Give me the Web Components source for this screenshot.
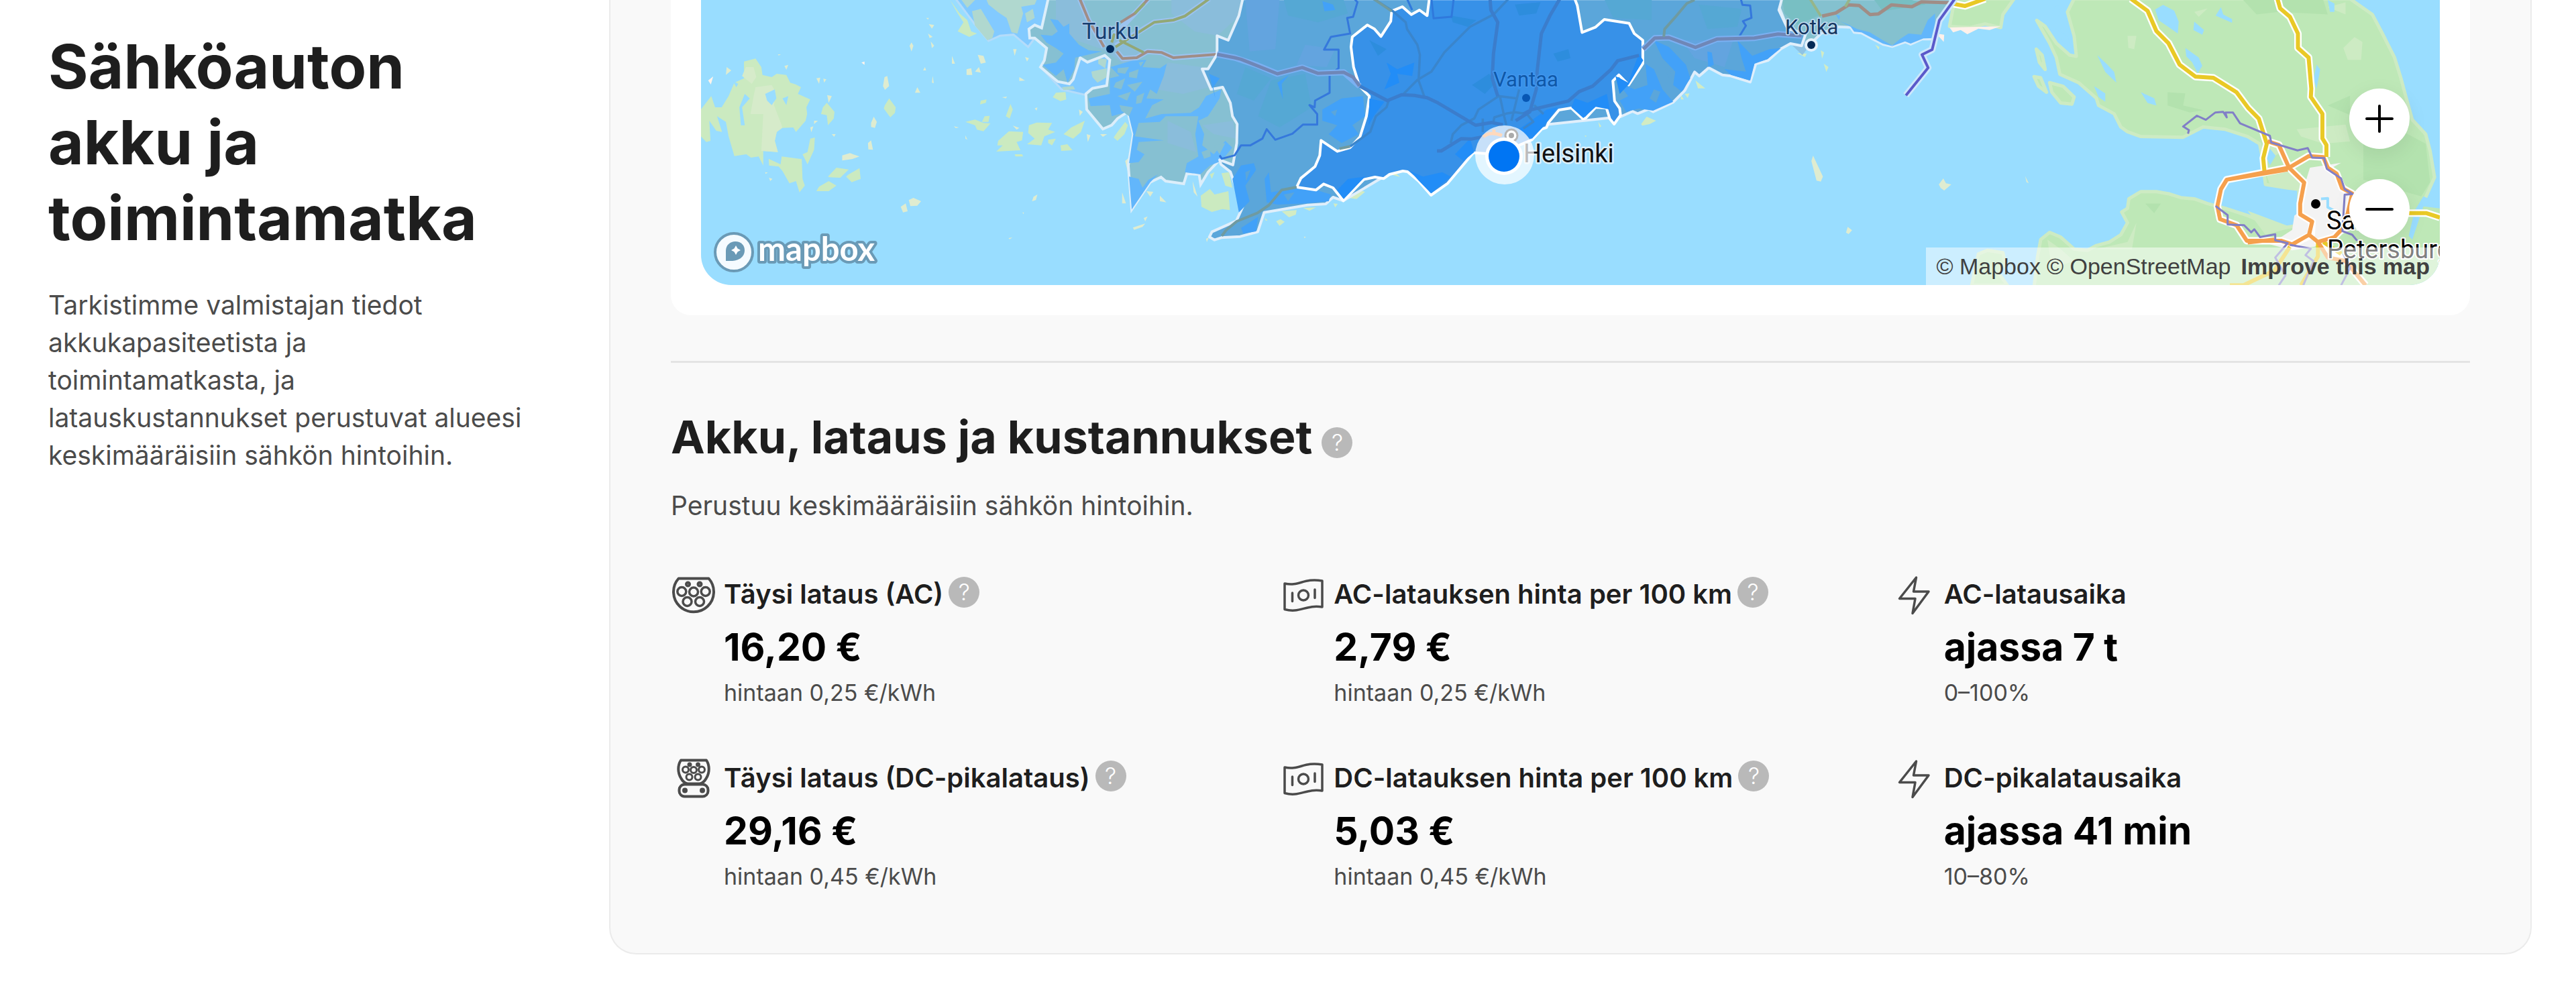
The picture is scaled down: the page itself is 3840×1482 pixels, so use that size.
<!DOCTYPE html>
<html lang="fi">
<head>
<meta charset="utf-8">
<meta name="viewport" content="width=device-width, initial-scale=1">
<title>Sähköauton akku ja toimintamatka</title>
<style>
  body { margin: 0; background: #fff; color: #1e1e1e; font-family: Inter, "Liberation Sans", sans-serif; font-size: 39px; line-height: 56px; }
</style>
</head>
<body>
<info-section>
  <span slot="title">Sähköauton akku ja toimintamatka</span>
  <span slot="intro">Tarkistimme valmistajan tiedot akkukapasiteetista ja toimintamatkasta, ja latauskustannukset perustuvat alueesi keskimääräisiin sähkön hintoihin.</span>
  <range-map></range-map>
  <cost-summary>
    <span slot="title">Akku, lataus ja kustannukset</span>
    <span slot="intro">Perustuu keskimääräisiin sähkön hintoihin.</span>
    <stat-item icon="ac" help label="Täysi lataus (AC)" value="16,20 €">hintaan 0,25 €/kWh</stat-item>
    <stat-item icon="bill" help label="AC-latauksen hinta per 100 km" value="2,79 €">hintaan 0,25 €/kWh</stat-item>
    <stat-item icon="bolt" label="AC-latausaika" value="ajassa 7 t">0–100%</stat-item>
    <stat-item icon="dc" help label="Täysi lataus (DC-pikalataus)" value="29,16 €">hintaan 0,45 €/kWh</stat-item>
    <stat-item icon="bill" help label="DC-latauksen hinta per 100 km" value="5,03 €">hintaan 0,45 €/kWh</stat-item>
    <stat-item icon="bolt" label="DC-pikalatausaika" value="ajassa 41 min">10–80%</stat-item>
  </cost-summary>
</info-section>

<template id="info-section">
  <style>
    :host { display: grid; grid-template-columns: minmax(0, 715px) minmax(0, 1fr); column-gap: 121px; padding: 0 66px 58px 72px; }
    h2 { margin: 43px 0 45px; font-size: 91px; line-height: 113px; font-weight: 700; }
    p { margin: 0; color: #4b4b4b; }
    .panel { box-sizing: border-box; border: 2px solid #ebebeb; border-top: 0; border-radius: 0 0 40px 40px; background: #f9f9f9; padding: 0 90px 90px; }
  </style>
  <header><h2><slot name="title"></slot></h2><p><slot name="intro"></slot></p></header>
  <div class="panel"><slot></slot></div>
</template>

<template id="help-tip">
  <style>
    :host { display: inline-flex; flex: none; }
    button { display: flex; align-items: center; justify-content: center; width: 46px; height: 46px; padding: 0; border: 0; border-radius: 50%; background: #b9b9b9; color: #fff; font: 300 34px/46px Inter, sans-serif; cursor: pointer; }
  </style>
  <button type="button" aria-label="Lisätietoja">?</button>
</template>

<template id="cost-summary">
  <style>
    :host { display: block; margin-top: 68px; border-top: 3px solid #e4e4e4; padding-top: 68px; }
    .head { display: flex; align-items: flex-end; gap: 14px; }
    .head help-tip { margin-bottom: 10px; }
    h3 { margin: 0; font-size: 68px; line-height: 84px; font-weight: 700; }
    p { margin: 33px 0 76px; color: #4b4b4b; }
    .grid { display: grid; grid-template-columns: repeat(3, minmax(0, 1fr)); gap: 75px 46px; }
  </style>
  <div class="head"><h3><slot name="title"></slot></h3><help-tip></help-tip></div>
  <p><slot name="intro"></slot></p>
  <div class="grid"><slot></slot></div>
</template>

<template id="stat-item">
  <style>
    :host { display: grid; grid-template-columns: 68px minmax(0, 1fr); column-gap: 11px; }
    svg { display: block; width: 68px; height: 56px; overflow: visible; fill: none; stroke: #4b4b4b; stroke-width: 4; stroke-linecap: round; stroke-linejoin: round; }
    .label { display: flex; align-items: flex-start; gap: 8px; }
    .label help-tip { margin-top: 2px; }
    h4 { margin: 0; font-size: 40px; line-height: 56px; font-weight: 600; }
    .value { margin: 16px 0 9px; font-size: 57px; line-height: 70px; font-weight: 700; color: #000; }
    .hint { font-size: 34px; line-height: 48px; color: #4b4b4b; }
  </style>
  <svg viewBox="0 0 68 56" aria-hidden="true"></svg>
  <div><div class="label"><h4></h4></div><div class="value"></div><div class="hint"><slot></slot></div></div>
</template>

<template id="range-map">
  <style>
    :host { display: block; background: #fff; padding: 0 45px 45px; border-radius: 0 0 30px 30px; }
    .map { position: relative; height: 425px; border-radius: 0 0 45px 45px; overflow: hidden; background: #99ddff; }
    svg.canvas { display: block; width: 100%; height: 100%; }
    svg.canvas path, svg.canvas polygon { vector-effect: non-scaling-stroke; }
    .zoom { position: absolute; right: 45px; bottom: 68px; display: flex; flex-direction: column; gap: 45px; }
    .zoom button { width: 90px; height: 90px; padding: 0; border: 0; border-radius: 50%; background: #fff; box-shadow: 0 8px 30px rgba(0,0,0,.08); display: grid; place-items: center; }
    .zoom svg { width: 42px; height: 42px; stroke: #000; stroke-width: 4; stroke-linecap: round; }
    .credit { position: absolute; right: 0; bottom: 0; display: flex; gap: 9px; padding: 0 15px; background: rgba(255,255,255,.5); font: 34px/56px "Liberation Sans", Arial, sans-serif; color: #404040; }
    .credit a { color: #404040; text-decoration: none; white-space: nowrap; }
    .credit a:last-child { font-weight: 700; margin-left: 6px; }
    .city { font-family: Roboto, sans-serif; paint-order: stroke; stroke-linejoin: round; }
    .brand { font: 700 49px Lato, sans-serif; fill: #fff; stroke: #6a9ab6; stroke-width: 8; paint-order: stroke; stroke-linejoin: round; }
  </style>
  <div class="map">
    <svg class="canvas" viewBox="1045 0 2592 425" preserveAspectRatio="xMidYMid slice" role="img" aria-label="Toimintamatka kartalla">
      <!-- Western archipelago and the Turku coast -->
      <g transform="translate(1000) scale(.574 .33333)">
        <g fill="#cbeac0">
          <path d="M190 275 220 262 235 300 238 335 262 345 275 330 300 335 310 370 325 378 338 390 330 420 362 445 352 480 354 510 350 540 325 590 318 570 290 572 275 590 270 630 278 680 240 675 240 740 228 700 208 705 196 690 165 698 150 610 143 545 120 520 133 590 118 585 100 540 103 630 92 635 78 610V490L105 430 115 480 132 480 150 430 165 370 190 350Z"/>
          <path d="M254 710 285 735 288 700 340 712 342 800 348 830 334 860 325 810 308 820 290 765 280 745 255 740ZM362 620 374 615 372 670 355 735 342 690 355 680ZM395 480 405 460 425 500 423 530 408 560 405 515 390 510ZM408 790 430 750 462 758 440 795 412 793ZM462 780 490 752 493 800 470 815 455 790ZM385 835 410 810 430 830 410 855 378 855ZM185 380 175 420 162 410 165 370Z"/>
          <path d="M556 470 567 440 584 480 582 505 570 525 553 485ZM850 630 878 587 915 590 912 628 898 635 908 672 845 678 862 650 848 650ZM930 560 950 548 990 550 980 580 998 590 970 610 962 650 925 645 945 620 928 595ZM1020 600 1040 570 1075 540 1065 590 1045 620 1020 600ZM765 545 790 535 812 550 830 552 812 587 795 580 790 560ZM805 450 820 445 818 460 803 467ZM815 520 828 518 825 545 808 545ZM882 465 888 490 880 530 870 520ZM1012 650 1030 645 1043 672 1014 675ZM980 625 1000 620 990 650 980 640ZM893 690 912 690 915 700 895 700ZM1000 415 1025 412 1027 445 1012 452 992 435ZM1160 590 1180 545 1187 560 1178 600 1160 630 1150 615ZM1376 875 1400 845 1412 870 1448 855 1452 940 1432 935 1405 948 1378 925ZM1430 775 1450 770 1458 840 1440 830ZM1400 780 1412 770 1405 800ZM725 0 750 60 770 90 780 140 795 150 775 165 745 140 760 100 745 60Z"/>
        </g>
        <path fill="#d6ebca" d="M220 390 262 380 272 410 268 470 290 570 275 590 270 630 278 680 235 675 240 510 207 510 215 430ZM195 300 185 340 210 375 222 345 215 300Z"/>
        <path fill="#99ddff" d="M192 420 205 440 185 480 192 560 182 560 178 480ZM245 420 270 400 274 440 262 470 250 450ZM300 470 290 440 305 430ZM160 360 175 375 170 390Z"/>
        <path fill="#dfecd0" d="M378 350 388 347 385 375ZM396 352 404 355 398 370ZM406 425 418 430 410 460ZM555 345 562 340 567 385 556 402 551 385ZM625 190 630 205 625 230 620 205ZM675 185 684 205 678 215ZM670 108 684 112 678 128ZM663 80 670 80 668 88ZM668 150 680 165 672 170ZM730 250 738 285 730 285ZM768 310 780 305 783 335 768 335ZM790 320 800 300 805 325ZM797 245 812 250 818 280 805 285ZM889 220 898 220 893 250ZM920 255 930 260 925 275ZM905 345 920 360 905 362ZM634 415 640 390 648 415ZM680 340 683 372 678 370ZM660 300 663 315 655 315ZM520 550 527 522 535 545 530 572 520 568ZM512 640 520 628 525 670 513 668ZM445 695 465 685 490 700 470 712 445 718ZM597 925 610 910 615 945 603 950ZM618 895 630 885 650 900 640 920 622 922ZM942 880 952 870 948 895 938 900ZM1200 1018 1232 1000 1225 1015 1203 1028ZM1228 975 1238 968 1232 990ZM1235 855 1253 858 1245 880ZM1270 875 1287 905 1270 900ZM1172 860 1182 910 1172 910ZM1180 720 1190 705 1187 770ZM888 562 905 572 898 580ZM735 565 748 570 740 573ZM765 605 770 625 765 620ZM1115 600 1133 600 1122 612ZM1080 600 1090 605 1083 635ZM1060 490 1070 500 1062 518ZM860 435 873 432 870 440ZM945 485 952 480 950 495ZM145 300 157 315 143 335ZM295 295 305 290 300 312ZM278 243 286 243 280 248ZM255 795 264 800 258 810ZM245 770 252 772 246 778ZM418 600 428 600 424 612ZM372 540 382 540 372 555ZM362 570 370 565 365 592ZM877 1065 887 1062 880 1070ZM913 950 917 950 916 958ZM1355 810 1368 880 1358 860ZM1390 1068 1397 1062 1392 1083Z"/>
        <path fill="#fff4ec" d="M97 360 110 342 104 378ZM495 280 503 275 503 290Z"/>
        <!-- NW districts -->
        <path fill="#82caff" stroke="#b4dcfa" stroke-width="3" d="M740-5 790 110 825 183 855 160 890 155 928 210 945 170 930 130 945 112 963 125 980-5Z"/>
        <path fill="#b0d8cf" d="M782 50 805 40 840 140 835 170 822 180 790 115ZM820 0H950L945 20 910 30 915 60 900 150 885 145 872 80 850 55 825 20ZM755 0 790 0 770 35ZM920 60 940 40 945 80 925 100Z"/>
        <path fill="#82caff" stroke="#b4dcfa" stroke-width="3" d="M960 300 1015 400 1078 425 1140 383V240H1055Z"/>
        <path fill="#b0d8cf" d="M1110 260 1132 265 1128 305 1110 285ZM1092 320 1132 305 1132 345 1108 370 1095 345ZM1015 390 1045 385 1050 400 1020 403Z"/>
        <!-- Turku district -->
        <path fill="#86c0d2" stroke="#dceefa" stroke-width="4" d="M980-5 963 125 945 112 930 130 932 170 945 170 976 215 970 270 960 300 1005 365 1035 375 1045 355 1063 258 1082 278 1127 248 1140 268 1132 383 1095 395 1078 420 1080 490 1122 577 1145 560 1160 530 1187 500 1201 600 1188 740 1197 937 1245 815 1273 792 1285 810 1332 822 1340 777 1372 780 1376 825 1395 770 1425 715 1460 738 1500 500V-5Z"/>
        <path fill="#8abddb" d="M1000 0 1060 0 1100 130 1170 180 1240 230 1180 290 1120 220 1000 150ZM1300 0 1480 0 1470 80 1420 160 1360 140 1300 60ZM1290 280 1380 300 1400 390 1330 420 1260 400ZM1290 540 1350 590 1365 680 1290 640ZM1380 560 1460 540 1468 620 1410 600Z"/>
        <path fill="#62b6fb" d="M985 85 1005 90 1020 120 1035 105 1035 150 1060 200 1085 225 1120 230 1050 258 1048 310 1030 370 1020 310 1000 340 965 290 1000 280 1020 240 1000 215 975 190 960 155 990 160 1005 140ZM1142 300 1200 270 1235 268 1225 300 1270 305 1288 285 1280 340 1262 420 1245 400 1235 440 1280 445 1250 470 1232 530 1275 510 1350 505 1372 480 1390 430 1430 400 1425 440 1395 520 1370 540 1385 600 1380 650 1410 690 1440 630 1458 660 1430 720 1400 740 1375 780 1335 770 1340 730 1370 700 1362 600 1370 520 1285 520 1270 545 1215 550 1205 610 1280 628 1215 635 1210 670 1230 690 1215 725 1190 730 1201 600 1187 500 1145 520 1140 470 1090 475 1085 440 1140 420 1140 350 1165 340ZM1190 790 1215 800 1225 840 1240 805 1265 780 1245 815 1197 937Z"/>
        <path fill="#86c0d2" d="M1160 305 1190 300 1180 330 1160 325ZM1190 325 1215 310 1210 350 1190 345ZM1155 370 1180 350 1170 400 1150 390ZM1185 380 1225 365 1205 410ZM1210 430 1230 415 1222 460 1208 465ZM1160 430 1195 410 1185 450ZM1165 470 1200 480 1190 520 1170 495ZM1378 680 1400 665 1402 700 1385 710ZM1410 650 1440 640 1425 690ZM1215 280 1228 275 1220 298Z"/>
        <g fill="none" stroke="#9cc3ef" stroke-width="8" stroke-linejoin="round"><path d="M1062-5 1085 90 1125 210M1150 160 1205 60 1240-5M1155 205 1255 100 1305 90 1335 72 1398-5M1158 230 1173 262 1210 258 1238 230 1275 235 1305 258 1418 243"/></g>
        <g fill="none" stroke-width="4" stroke-linejoin="round"><path stroke="#a08d86" d="M1062-5 1085 90 1125 210M1168 100 1205 60 1240-5M1158 230 1173 262 1210 258 1238 230 1275 235 1305 258 1418 243"/><path stroke="#92a875" d="M1145 190 1152 150M1205 60 1230 15M1155 210 1255 100 1305 90 1335 72 1398-5M1165 180 1228 235"/></g>
      </g>
      <!-- Southern coast -->
      <g transform="translate(1850) scale(.6378 .33333)" stroke-linejoin="round">
        <path fill="#d3ecc3" d="M250 885 275 850 290 858 270 890ZM95 945 130 940 128 960 112 972ZM145 930 175 928 160 943ZM82 990 92 980 102 992 90 1010ZM55 975 62 985 58 988ZM216 910 226 912 220 928ZM350 780 362 775 372 792ZM935 555 948 522 970 540 955 555 938 562ZM1062 360 1085 395 1068 395ZM1037 420 1048 418 1044 438ZM1028 425 1035 445 1028 445ZM835 545 842 565 838 570ZM803 605 808 608 805 613ZM733 505 738 520 732 528ZM1355 225 1363 235 1358 262ZM1362 285 1373 300 1368 322ZM1300 238 1322 240 1318 255ZM1482 200 1492 210 1490 222Z"/>
        <path fill="#dfecd0" d="M1337 696 1360 790 1355 812 1345 808 1333 720ZM1418 1015 1428 1030 1420 1047 1414 1040ZM147 1058 152 1060 148 1065Z"/>
        <path fill="#84c1cf" stroke="#d8ecfb" stroke-width="4" d="M1250-5 1278 130 1310 205 1330 200 1355 150 1395 120 1425 122 1433 145 1450 148 1500 198 1522 208 1553 187 1565 198 1591 175 1614 175 1630 91 1661-5Z"/>
        <path fill="#78bfc3" d="M1265 0 1330 0 1350 70 1300 110 1270 60ZM1480 0H1568L1600 20 1500 50Z"/>
        <path fill="#62b6fb" d="M1400 95 1420 110 1440 130 1470 145 1500 180 1522 203 1540 175 1560 150 1590 155 1605 90 1622 60 1622 170 1595 172 1565 195 1552 185 1522 206 1500 195 1450 145 1433 142 1425 120ZM1390 65 1400 70 1398 90Z"/>
        <path fill="#8fc3e4" d="M1284 195 1325 180 1330 200 1312 247Z"/>
        <path fill="#5ba6da" stroke="#e1effb" stroke-width="4" d="M4-5-5 70-30 180-56 160-56 243-77 308-91 308-70 400-43 390-25 460-20 520-9 555-10 640-19 738-50 715-47 735-25 768 4 925-11 988-68 1037-74 1060-62 1073-46 1063-2 1058 39 1037 54 950 155 917 198 912 215 882 239 898 500 600 887 522 915 498 927 508 953 488 963 500 1010 457 1037 405 1060 322 1071 340 1093 303 1125 335 1145 340 1190 367 1203 286 1232 270 1262 218 1284 195 1310 205 1320 150 1278 130 1257 45 1264-5Z"/>
        <path fill="#55a8d4" d="M100 0 240 0 250 60 180 100 110 70ZM70 360 150 330 165 480 90 570 40 520ZM850 0 960 0 960 90 870 80ZM1070 20 1170 40 1160 120 1090 130ZM10 300 70 350 30 450-10 420Z"/>
        <path fill="#63a4df" d="M10 0 90 0 80 220 20 230ZM150 200 220 220 200 300 130 290ZM1030 180 1150 180 1130 300 1060 260Z"/>
        <path fill="#42a1f8" d="M190 5 215 20 220 45 195 50ZM190 490 235 440 285 430 290 520 260 560 275 600 235 640 205 600 225 560 190 540ZM0 740 30 730 35 760 10 830 20 900-5 950-20 800ZM55 800 65 770 70 860 100 850 130 835 175 850 210 870 205 900 150 910 85 915 60 905ZM-60 440-75 330-50 350-65 390ZM85 370 112 335 95 375 98 445ZM945 285 965 310 985 400 1010 455 963 495 930 485 900 500 885 450 905 430 880 370 920 400 950 380ZM965 180 1000 210 1040 290 1050 350 1030 410 1010 380 1015 320 985 260ZM1160 180 1195 250 1235 220 1262 215 1230 265 1200 285 1190 360 1145 335 1130 310 1180 320 1170 260ZM1090 230 1100 235 1105 290 1092 300ZM0 1020 40 970 35 1035 5 1045Z"/>
        <path fill="#5ba6da" d="M10 770 22 760 12 810ZM210 500 225 490 220 520ZM965 400 980 410 970 460 955 440ZM990 300 1005 320 1000 350ZM100 870 125 860 110 900Z"/>
        <g fill="none" stroke="#3578dc" stroke-width="3"><path d="M-50 695-45 710-15 695 0 650 22 650 50 620 60 578 80 625 120 598 145 557 178 557V510L160 470 172 480 173 450 207 415V335L228 305V222H194L210 165 255 150 248 80 262 75 272 10 265-5M1168-5 1172 22 1190 25 1193 80 1173 95 1180 115 1163 168"/></g>
        <path fill="#3791e8" stroke="#fff" stroke-width="4" d="M440-5 435 70 417 45 398 65 377 30 352 50 350 95 327 163 312 130 295 112 260 165 257 210 263 300 277 385 300 430 293 520 278 612 255 660 225 677 187 628 184 695 173 745 140 797 130 837 175 850 193 823 215 840 239 898 287 803 313 792 333 799 347 780 378 765 389 768 415 810 444 873 483 820 543 683 600 690 680 625 703 577 714 570 718 550 743 492 772 483 799 532 806 528 829 480 854 483 862 532 872 555 887 515 885 485 873 452 869 362 883 335 906 380 939 285 939 180 919 150 907 104 849 87 828 122 797 145 786 25 780-5Z"/>
        <path fill="#2d8ddd" d="M490 70 550 90 530 120 495 100ZM540 380 580 330 595 370 570 420ZM730 240 765 220 770 260 740 275ZM640 20 700 10 690 60 650 70ZM300 180 340 220 320 250Z"/>
        <path fill="#228df7" d="M340 280 365 310 405 280 400 340 365 330 370 370 335 400 350 330ZM300 440 335 455 310 520 298 560ZM225 850 250 800 290 790 240 890ZM395 765 425 790 470 770 490 790 444 865 415 808ZM500 690 535 620 545 680 520 720ZM780 440 810 460 855 420 862 490 829 478 800 528 772 480ZM875 340 905 370 930 240 940 270 906 378 885 420ZM640 590 715 490 740 480 705 570 680 620Z"/>
        <g fill="none" stroke="#3a85cc" stroke-width="3.5"><path d="M310-5 355 50 385 100 388 130 412 200 418 245 415 360 428 430M625-5 590 65 535 120 475 235 445 320 412 358 380 420M345 450 340 480 315 520 302 590 255 655M490 640 495 600 515 560 545 530 555 490 602 430 645 440M605 430 615 520 620 560M590 545 592 525 620 508 640 502 668 510 683 545 660 575M565 530V590M632 540 650 400M685 470 707 510"/></g>
        <g fill="none" stroke="#3b7dcc" stroke-width="5"><path d="M277 385 342 450 375 424 405 427 435 437 460 460 548 560 585 548 612 558M745-5 722 70 702 150 692 320 690 400 675 500 642 540M582-5 584 45 600 100 590 240 587 350 600 430M458 675H468L515 620 538 622 570 610M660 510 680 490 765 452 790 410 822 385 865 310 880 272 930 248"/></g>
        <path fill="none" stroke="#2f79dc" stroke-width="3" d="M445-5 450 82 492 75 497-5M388-5 400 45"/>
        <path fill="none" stroke="#7bb0f2" stroke-width="9" d="M-56 243-15 258 35 290 85 330 143 302 180 328 240 323 277 385M940 220 967 170 1000 168 1062 212 1112 175 1200 170 1255 152 1310 160"/>
        <path fill="none" stroke="#6f87b7" stroke-width="5" d="M-56 243-15 258 0 265 85 330 143 302 180 328 240 323 262 345 277 385M940 220 967 170 1000 168 1062 212 1112 175 1200 170 1255 152 1310 160"/>
        <path fill="none" stroke="#6f9aa0" stroke-width="4" d="M130 837 95 850 65 918 38 953-10 990-35 1030-45 1055M230 665 255 655M1060 0 1042 15 1018 70 990 130 988 165M310-5 352 50"/>
        <path fill="none" stroke="#a08d86" stroke-width="5" d="M1358 72 1390 58 1420 22 1445 25 1470 65 1490 62 1520 22 1568 30 1590 8 1655 12"/>
        <path fill="none" stroke="#96b58a" stroke-width="4" d="M1330-5 1355 72M1423-5 1412 30"/>
      </g>
      <!-- Karelian Isthmus and the Gulf -->
      <g transform="translate(2800) scale(.6633 .35714)" stroke-linejoin="round">
        <g fill="#bee8b7" stroke="#cdebc3" stroke-width="5">
          <path d="M172-5H305L280 60 275 115 240 100 205 115 160 110Z"/>
          <path d="M440-5 425 50 440 150 445 235 430 230 400 180 375 110 356 85 385 180 400 240 408 310 450 345 490 410 495 440 530 475 545 530 560 550 590 570 685 573 730 530 780 540 830 570 857 600 862 650 870 770 920 785 945 790V940L900 955 830 900 780 870 740 850 710 830 680 825 655 810 625 800 590 800 563 830 560 870 547 885 560 930 545 980 520 1010 490 1025 470 1045 440 1040 410 990 385 970 365 1000 358 1070 350 1200H1270V865L1225 845 1250 740 1240 630 1230 560 1200 500 1185 400 1175 330 1160 240 1130 130 1110 60 1060-5Z"/>
          <path d="M385 345 415 360 440 405 435 435 410 430 390 385ZM350 320 365 325 378 385 360 360ZM355 205 368 230 375 290 362 260ZM225 1060 245 1045 280 1055 285 1100 270 1140 290 1191H210Z"/>
        </g>
        <path fill="#fff1ea" d="M160 115 275 110 250 125 225 120 200 143 185 125 168 135ZM130 140 148 145 147 175Z"/>
        <path fill="#dfecd0" d="M136 770 146 745 152 765 164 770 148 795 140 785ZM330 735 338 765 333 760Z"/>
        <path fill="#b3e2ae" d="M820 0 1000 0 1010 60 900 50 850 60ZM650 385 690 390 685 440 730 460 700 470 650 440ZM1090 560 1180 550 1230 600 1240 760 1220 820 1090 750ZM600 850 635 850 620 890ZM1010 440 1060 400 1060 480Z"/>
        <path fill="#cdebc3" d="M1045 200 1070 155 1088 175 1085 250 1055 250ZM560 150 580 150 575 205 562 200ZM710 50 740 35 720 70ZM940 540 1050 520 1060 590 1000 600 950 570ZM860 620 890 610 900 640 870 680ZM870 720 950 720 950 790 880 770ZM830 880 930 950 870 980ZM380 1000 410 1040 440 1090 390 1120ZM490 1040 560 1010 580 930 570 1040ZM1010 30 1050 10 1050 60Z"/>
        <path fill="#99ddff" d="M622 40 640 20 665 45 675 90 673 140 650 110 630 85ZM758 65 770 30 775 60 795 80 795 95ZM710 90 732 125 728 145 708 125ZM690 200 720 240 728 275 718 305 705 260 692 235ZM590 385 620 410 625 440 605 430ZM492 230 515 270 530 300 535 345 510 300ZM485 360 510 390 510 425 495 405ZM398 120 425 150 435 200 415 175ZM985 270 993 290 985 370 978 330ZM880 620 893 650 880 690 873 660ZM1010 0 1025 15 1025 50 1015 50ZM395 30 405 20 410 60 400 70ZM1225 820 1262 850V870L1225 862 1200 1000 1192 985 1205 880Z"/>
        <path fill="#f3f3f3" d="M970 700 1040 680 1010 710 1040 750 1065 810 1060 960 1020 1000 980 1030 930 1045 880 1020 930 960 935 900 950 880 945 790 960 760Z"/>
        <path fill="none" stroke="#99ddff" stroke-width="4" d="M995 830 1010 828V865L1025 880"/>
        <g fill="none" stroke="#fff" stroke-width="11"><path d="M568-5 605 45 625 130 652 180 677 270 713 320 753 325 805 385 832 452 855 495 873 600 865 660 868 720M897-5 903 35 925 70 943 140V200L967 240 973 370 972 405 998 475V578L1007 605V655M166 15 195 25 240-5M875 590 900 605 923 700 957 762 948 850V895L975 925 973 980 930 1020 905 1005H828L805 940 768 915 762 860 770 790 783 750 923 700 967 652 1000 656 1010 700 1030 725 1042 785 1065 808 1055 890 1040 960 1025 990 988 1010 1050 1090 1095 1191M1190 890H1232L1262 908"/></g>
        <g fill="none" stroke="#e9c926" stroke-width="6"><path d="M568-5 605 45 625 130 652 180 677 270 713 320 753 325 805 385 832 452 855 495 873 600 865 660 868 720M897-5 903 35 925 70 943 140V200L967 240 973 370 972 405 998 475V578L1007 605V655M166 15 195 25 240-5M1190 890H1232L1262 908M988 1010V1070L950 1191M925 1030 890 1130 820 1191 790 1191M1000 1010 1040 1060"/></g>
        <g fill="none" stroke="#f5a04d" stroke-width="6"><path d="M875 590 900 605 923 700 957 762 948 850V895L975 925 968 980 930 1020 905 1005H828L805 940 768 915 762 860 770 790 783 750 923 700 967 652 1000 656 1010 700 1030 725 1042 785 1065 808 1055 890 1040 960 1025 990 988 1010 1010 1075 1050 1090 1095 1191M790 748 920 708M830 1012 890 1000M968 980 988 1010"/></g>
        <g fill="none" stroke="#817fc7" stroke-width="3"><path d="M696 558 698 543 685 528 716 483 736 500 757 470 775 467 783 490 780 470H797L813 515 880 567 883 595 942 628 965 618 975 658 1002 660 1008 705 1040 745 1048 790 1066 810 1048 813 1043 965 1065 980 1076 1005M758 860 785 898V937L822 940 838 970 845 957 858 990 892 978V1003L920 1015 892 1075 915 1150 900 1191M925 1022 972 1038 960 1065 978 1090 955 1191M1045 1060 1060 1120 1040 1191"/></g>
        <path fill="none" stroke="#cce7fc" stroke-width="10" d="M172-5 137 85 121 207 98 228 112 283 62 398"/>
        <path fill="none" stroke="#5b59ca" stroke-width="4" d="M172-5 137 85 121 207 98 228 112 283 62 398"/>
      </g>
      <circle cx="1655" cy="73" r="6" fill="#002b5c"/><circle cx="2275" cy="146" r="6" fill="#0757b4"/><circle cx="2700" cy="67" r="10" fill="#e5f2fc"/><circle cx="2700" cy="67" r="6" fill="#042a56"/><circle cx="3452" cy="304" r="7"/>
      <g class="city">
        <text x="1613" y="58" font-size="34" fill="#173f70" stroke="#a9c9ea" stroke-width="3">Turku</text>
        <text x="2226" y="129" font-size="31" fill="#0f58a8" stroke="#4297ef" stroke-width="3">Vantaa</text>
        <text x="2661" y="51" font-size="31" fill="#14365f" stroke="#c4def3" stroke-width="3">Kotka</text>
        <text x="2271" y="242" font-size="38" fill="#111" stroke="#d9effc" stroke-width="5">Helsinki</text>
        <text x="3468" y="342" font-size="38" stroke="#fff" stroke-width="4">Saint</text>
        <text x="3469" y="385" font-size="38" stroke="#fff" stroke-width="4">Petersburg</text>
      </g>
      <circle cx="2243" cy="231" r="44" fill="#fff" fill-opacity=".72"/>
      <path d="M2211 204q10-9 28-2M2227 193v8" fill="none" stroke="#ffd9bd" stroke-width="5"/>
      <circle cx="2253" cy="202" r="9" fill="#fff" stroke="#b5b5b5" stroke-width="3"/><circle cx="2253" cy="202" r="4" fill="#aaa"/>
      <circle cx="2242" cy="233" r="28" fill="#fff"/><circle cx="2242" cy="233" r="23" fill="#0075f3"/>
      <circle cx="1094" cy="376" r="28" fill="#f5fbff" stroke="#6a9ab6" stroke-width="4"/>
      <path fill="#6a9ab6" d="M1082 389V374C1082 365 1089 360 1096 360C1105 360 1110 366 1110 373C1110 384 1100 389 1090 389Z"/>
      <path fill="#fff" d="M1097 366 1099.500 370.500 1104 373 1099.500 375.500 1097 380 1094.500 375.500 1090 373 1094.500 370.500Z"/>
      <text class="brand" x="1130" y="389">mapbox</text>
    </svg>
    <div class="zoom">
      <button type="button" aria-label="Lähennä"><svg viewBox="0 0 42 42" aria-hidden="true"><path d="M2 21H40M21 2V40"/></svg></button>
      <button type="button" aria-label="Loitonna"><svg viewBox="0 0 42 42" aria-hidden="true"><path d="M2 21H40"/></svg></button>
    </div>
    <div class="credit"><a href="#mapbox">© Mapbox</a><a href="#osm">© OpenStreetMap</a><a href="#improve">Improve this map</a></div>
  </div>
</template>

<script>
  const icons = {
    ac: '<g stroke-width="4"><path d="M11.500 4.500H56.500A30 30 0 1 1 11.500 4.500Z"/></g><g stroke-width="3.500"><circle cx="16.300" cy="24" r="6.500"/><circle cx="34" cy="24.500" r="6.500"/><circle cx="51.700" cy="24" r="6.500"/><circle cx="24.500" cy="39" r="6.500"/><circle cx="43" cy="39" r="6.500"/></g><circle cx="25.500" cy="13" r="2.500"/><circle cx="43" cy="13" r="2.500"/>',
    dc: '<path d="M15 1.500H53C58 9 58 20 53 28Q49 35.500 43 36.500H25Q19 35.500 15 28C10 20 10 9 15 1.500Z"/><rect x="12.500" y="37.500" width="43" height="18" rx="8"/><g stroke-width="3"><circle cx="22" cy="15.500" r="4.500"/><circle cx="34" cy="16" r="4.500"/><circle cx="46" cy="15.500" r="4.500"/><circle cx="27.500" cy="26.500" r="4.500"/><circle cx="40.500" cy="26.500" r="4.500"/></g><g fill="#4b4b4b" stroke-width="2"><circle cx="28" cy="8" r="2.500"/><circle cx="40.500" cy="8" r="2.500"/><circle cx="21" cy="46.500" r="3"/><circle cx="47" cy="46.500" r="3"/></g>',
    bill: '<g stroke-width="3.500"><path d="M6 12C28 17 34 3 62 8V47C38 43 28 57 6 50.500Z"/><circle cx="34" cy="29.500" r="7.500"/><path d="M17.500 26V38.500M51 21V33.500"/></g>',
    bolt: '<path stroke-width="3.500" d="M37.500 3 12.500 34.500H36L32 56.500 56 24H33.500Z"/>'
  };

  class TemplateElement extends HTMLElement {
    constructor() {
      super();
      this.attachShadow({ mode: 'open' }).append(document.getElementById(this.localName).content.cloneNode(true));
    }
  }
  class HelpTip extends TemplateElement {}
  class RangeMap extends TemplateElement {}
  class CostSummary extends TemplateElement {}
  class InfoSection extends TemplateElement {}
  class StatItem extends TemplateElement {
    connectedCallback() {
      const root = this.shadowRoot;
      root.querySelector('svg').innerHTML = icons[this.getAttribute('icon')];
      root.querySelector('h4').textContent = this.getAttribute('label');
      root.querySelector('.value').textContent = this.getAttribute('value');
      if (this.hasAttribute('help') && !root.querySelector('help-tip')) root.querySelector('.label').append(document.createElement('help-tip'));
    }
  }
  customElements.define('help-tip', HelpTip);
  customElements.define('range-map', RangeMap);
  customElements.define('stat-item', StatItem);
  customElements.define('cost-summary', CostSummary);
  customElements.define('info-section', InfoSection);
</script>
</body>
</html>
